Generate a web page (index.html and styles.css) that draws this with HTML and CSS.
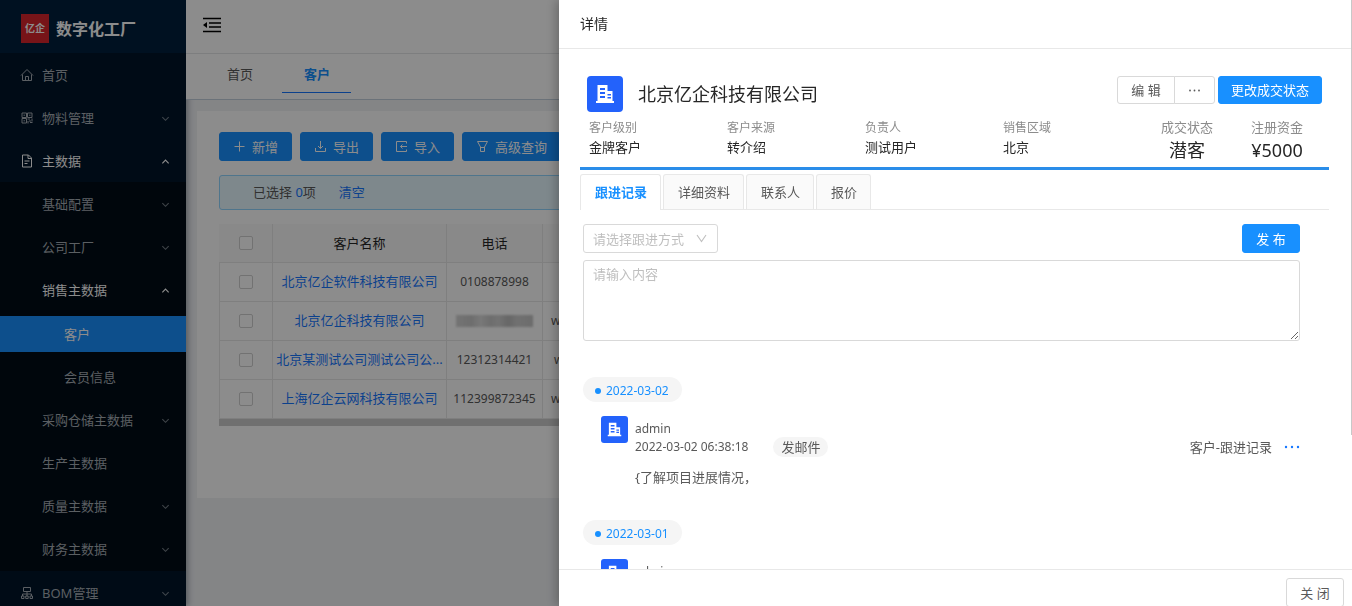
FILE: index.html
```html
<!DOCTYPE html>
<html lang="zh-CN">
<head>
<meta charset="utf-8">
<title>数字化工厂</title>
<link rel="stylesheet" href="styles.css">
</head>
<body>
<svg class="defs" aria-hidden="true">
  <symbol id="down" viewBox="0 0 10 10"><path d="M1.5 3.5 5 7l3.500-3.500" fill="none" stroke="currentColor" stroke-width="1.200"/></symbol>
  <symbol id="chevron" viewBox="0 0 13 13"><path d="M2 3l4.500 6.500L11 3" fill="none" stroke="currentColor" stroke-width="1.100"/></symbol>
  <symbol id="up" viewBox="0 0 10 10"><path d="M1.500 7 5 3.500 8.500 7" fill="none" stroke="currentColor" stroke-width="1.300"/></symbol>
  <symbol id="building" viewBox="0 0 36 36"><path fill="#fff" fill-rule="evenodd" d="M10.500 9h10v6h5v10H27v2H9v-2h1.500zM13 12v2h5v-2zM13 16v2h5v-2zM13 20v2h5v-2zM20.500 18v1.500H24V18zM20.500 21v1.500H24V21z"/></symbol>
  <symbol id="dots" viewBox="0 0 16 16"><circle cx="2" cy="8" r="1.200"/><circle cx="8" cy="8" r="1.200"/><circle cx="14" cy="8" r="1.200"/></symbol>
  <symbol id="dots-small" viewBox="0 0 13 13"><circle cx="2" cy="6.500" r=".9"/><circle cx="6.500" cy="6.500" r=".9"/><circle cx="11" cy="6.500" r=".9"/></symbol>
</svg>

<div class="app">
  <aside class="sidebar">
    <div class="brand"><span class="brand-mark">亿企</span><span class="brand-name">数字化工厂</span></div>
    <nav>
      <ul class="menu">
        <li><a href="#" class="item"><svg class="ico" viewBox="0 0 14 14"><path d="M1 7.500 7 1.500l6 6M2.500 6.500v6h9v-6M5.500 12.500v-4h3v4" /></svg><span>首页</span></a></li>
        <li><a href="#" class="item"><svg class="ico" viewBox="0 0 14 14"><path d="M2 2h4.500v4.500H2zM7.500 2H12v4.500H7.500zM2 7.500h4.500V12H2zM3.500 4.200h1.500M9 4.200h1.500M3.500 9.800h1.500M7.500 8h2.500M12 7.500v3M8 10v2.500M10 11.500h2.500M10 9v2"/></svg><span>物料管理</span><svg class="arrow"><use href="#down"/></svg></a></li>
        <li><a href="#" class="item open"><svg class="ico" viewBox="0 0 14 14"><path d="M2.500 1h6l3 3v9h-9zM8 1v3.500h3.500M4.500 7h5M4.500 9.500h3"/></svg><span>主数据</span><svg class="arrow"><use href="#up"/></svg></a>
          <ul class="menu sub">
            <li><a href="#" class="item"><span>基础配置</span><svg class="arrow"><use href="#down"/></svg></a></li>
            <li><a href="#" class="item"><span>公司工厂</span><svg class="arrow"><use href="#down"/></svg></a></li>
            <li><a href="#" class="item open"><span>销售主数据</span><svg class="arrow"><use href="#up"/></svg></a>
              <ul class="menu leaf">
                <li><a href="#" class="item active"><span>客户</span></a></li>
                <li><a href="#" class="item"><span>会员信息</span></a></li>
              </ul>
            </li>
            <li><a href="#" class="item"><span>采购仓储主数据</span><svg class="arrow"><use href="#down"/></svg></a></li>
            <li><a href="#" class="item"><span>生产主数据</span></a></li>
            <li><a href="#" class="item"><span>质量主数据</span><svg class="arrow"><use href="#down"/></svg></a></li>
            <li><a href="#" class="item"><span>财务主数据</span><svg class="arrow"><use href="#down"/></svg></a></li>
          </ul>
        </li>
        <li><a href="#" class="item"><svg class="ico" viewBox="0 0 14 14"><path d="M3.500 1.500h7v4h-7zM7 5.500v5M2.500 10V8h9v2M1.500 10h2.500v2.500H1.500zM5.700 10h2.500v2.500H5.700zM10 10h2.500v2.500H10z"/></svg><span>BOM管理</span><svg class="arrow"><use href="#down"/></svg></a></li>
      </ul>
    </nav>
  </aside>

  <div class="content">
    <header class="topbar">
      <button class="fold" aria-label="收起菜单"><svg viewBox="0 0 18 16"><path d="M0 1.500h18M6 6h12M6 10h12M0 14.500h18" stroke="#000" stroke-width="1.400"/><path d="M0 8 4 5v6z"/></svg></button>
    </header>
    <nav class="page-tabs"><a href="#">首页</a><a href="#" class="current">客户</a></nav>
    <main class="card">
      <div class="tools">
        <button class="btn primary"><svg viewBox="0 0 13 13"><path d="M6.500 1.500v10M1.500 6.500h10"/></svg>新增</button>
        <button class="btn primary"><svg viewBox="0 0 13 13"><path d="M6.500 1v7.500M4 6l2.500 2.500L9 6M1.500 8v3.500h10V8"/></svg>导出</button>
        <button class="btn primary"><svg viewBox="0 0 13 13"><path d="M11.500 3.500v-2h-10v10h10v-2M12 6.500H5.500M7.500 4.500l-2 2 2 2"/></svg>导入</button>
        <button class="btn primary"><svg viewBox="0 0 13 13"><path d="M1.500 1.500h10L8.500 7v4.500h-4V7zM4.500 7.500h4"/></svg>高级查询</button>
      </div>
      <div class="notice"><span>已选择 <b>0</b>项</span><a href="#">清空</a></div>
      <div class="table-wrap">
        <table>
          <colgroup><col class="c-check"><col class="c-name"><col class="c-phone"><col></colgroup>
          <thead><tr><th><input type="checkbox" aria-label="全选"></th><th>客户名称</th><th>电话</th><th></th></tr></thead>
          <tbody>
            <tr><td><input type="checkbox" aria-label="选择第1行"></td><td><a href="#">北京亿企软件科技有限公司</a></td><td>0108878998</td><td></td></tr>
            <tr><td><input type="checkbox" aria-label="选择第2行"></td><td><a href="#">北京亿企科技有限公司</a></td><td><div class="masked"></div></td><td class="site">w</td></tr>
            <tr><td><input type="checkbox" aria-label="选择第3行"></td><td><a href="#">北京某测试公司测试公司公...</a></td><td>12312314421</td><td class="site far">w</td></tr>
            <tr><td><input type="checkbox" aria-label="选择第4行"></td><td><a href="#">上海亿企云网科技有限公司</a></td><td>112399872345</td><td class="site">w</td></tr>
          </tbody>
        </table>
        <div class="hscroll"></div>
      </div>
    </main>
  </div>
</div>

<div class="mask"></div>

<section class="drawer" aria-label="详情">
  <header class="drawer-head">详情</header>
  <div class="drawer-body">
    <div class="summary">
      <div class="title-row">
        <svg class="avatar" viewBox="0 0 36 36"><use href="#building"/></svg>
        <h1>北京亿企科技有限公司</h1>
        <div class="actions">
          <div class="group"><button class="btn two">编 辑</button><button class="btn more" aria-label="更多"><svg><use href="#dots-small"/></svg></button></div>
          <button class="btn primary">更改成交状态</button>
        </div>
      </div>
      <div class="facts">
        <dl><dt>客户级别</dt><dd>金牌客户</dd></dl>
        <dl><dt>客户来源</dt><dd>转介绍</dd></dl>
        <dl><dt>负责人</dt><dd>测试用户</dd></dl>
        <dl><dt>销售区域</dt><dd>北京</dd></dl>
        <div class="stats">
          <dl><dt>成交状态</dt><dd>潜客</dd></dl>
          <dl><dt>注册资金</dt><dd>¥5000</dd></dl>
        </div>
      </div>
    </div>
    <nav class="card-tabs"><a href="#" class="current">跟进记录</a><a href="#">详细资料</a><a href="#">联系人</a><a href="#">报价</a></nav>
    <form class="follow">
      <div class="form-row">
        <div class="select"><select aria-label="跟进方式"><option>请选择跟进方式</option></select><svg><use href="#chevron"/></svg></div>
        <button type="button" class="btn primary two">发 布</button>
      </div>
      <textarea aria-label="内容" placeholder="请输入内容"></textarea>
    </form>
    <div class="day">
      <div class="date">2022-03-02</div>
      <article class="entry">
        <svg class="avatar small" viewBox="0 0 36 36"><use href="#building"/></svg>
        <div class="entry-main">
          <div class="who">admin</div>
          <div class="meta"><time>2022-03-02 06:38:18</time><span class="tag">发邮件</span><span class="source">客户-跟进记录</span><button class="link-dots" aria-label="更多操作"><svg><use href="#dots"/></svg></button></div>
          <p>{了解项目进展情况，</p>
        </div>
      </article>
    </div>
    <div class="day">
      <div class="date">2022-03-01</div>
      <article class="entry">
        <svg class="avatar small" viewBox="0 0 36 36"><use href="#building"/></svg>
        <div class="entry-main"><div class="who">admin</div></div>
      </article>
    </div>
  </div>
  <div class="thumb"></div>
  <footer class="drawer-foot"><button class="btn two">关 闭</button></footer>
</section>
</body>
</html>
```
FILE: styles.css
```css
* { box-sizing: border-box; }
body {
  margin: 0;
  font: 13px/20px "Noto Sans", "Noto Sans CJK SC", sans-serif;
  color: #595959;
  overflow: hidden;
}
a { color: #1677ff; text-decoration: none; }
ul { list-style: none; margin: 0; padding: 0; }
button, input, select, textarea { font: inherit; }
svg { flex: none; }
.defs { display: none; }

.app { display: flex; height: 100vh; background: #f0f2f5; }

/* sidebar */
.sidebar {
  flex: 0 0 186px;
  overflow: hidden;
  background: #001529;
  color: #a6adb4;
  box-shadow: 2px 0 6px rgba(0, 21, 41, .35);
}
.brand {
  display: flex;
  align-items: center;
  gap: 7px;
  height: 53px;
  padding: 4px 21px 0;
  background: #00203c;
  color: #fff;
}
.brand-mark {
  width: 28px;
  font-size: 10px;
  line-height: 29px;
  font-weight: 700;
  text-align: center;
  background: #d9262c;
}
.brand-name { font-size: 16px; font-weight: 700; }
.item {
  display: flex;
  align-items: center;
  height: 36px;
  margin-bottom: 7px;
  padding: 0 16px 0 20px;
  color: #a6adb4;
}
.menu { padding-top: 4px; }
.ico { width: 14px; height: 14px; margin-right: 8px; fill: none; stroke: currentColor; }
.arrow { width: 9px; height: 9px; margin-left: auto; opacity: .7; }
.item.open { color: #fff; }
.open .arrow { opacity: 1; }
.menu.sub { margin: -4px 0 4px; padding-bottom: 4px; background: #000c17; }
.sub .item { padding-left: 42px; }
.sub > li:last-child > .item { margin-bottom: 0; }
.menu.leaf { padding-top: 1px; }
.leaf .item { padding-left: 64px; }
.item.active { background: #1890ff; color: #fff; }

/* page */
.content { flex: 1; min-width: 0; }
.topbar, .page-tabs { position: relative; background: #fff; }
.topbar {
  display: flex;
  align-items: center;
  height: 54px;
  padding: 0 17px 4px;
  border-bottom: 1px solid #e4e6e8;
}
.fold { padding: 0; border: 0; background: none; }
.fold svg { display: block; width: 18px; height: 16px; }
.page-tabs {
  display: flex;
  gap: 8px;
  height: 46px;
  padding: 0 19px;
  border-bottom: 1px solid #c3d0dc;
}
.page-tabs a { height: 39px; padding: 10px 21px 9px 22px; color: #595959; }
.page-tabs .current { color: #1890ff; font-weight: 700; border-bottom: 1px solid #1677ff; }
.card {
  height: 387px;
  margin: 11px 11px 0;
  padding: 21px 22px;
  background: #fff;
}
.tools { display: flex; gap: 8px; }
.btn {
  display: inline-flex;
  align-items: center;
  justify-content: center;
  gap: 6px;
  height: 29px;
  padding: 0 13px;
  border: 1px solid #d9d9d9;
  border-radius: 3px;
  background: #fff;
  color: #595959;
  white-space: nowrap;
}
.btn svg { width: 13px; height: 13px; fill: none; stroke: currentColor; }
.two { min-width: 58px; }
.primary { border-color: #1890ff; background: #1890ff; color: #fff; }
.notice {
  display: flex;
  gap: 23px;
  margin-top: 14px;
  padding: 6px 33px 7px;
  border: 1px solid #91d5ff;
  border-radius: 3px;
  background: #e6f7ff;
}
.notice b { color: #1677ff; font-weight: 400; }
.table-wrap { margin-top: 14px; }
table { width: 100%; border-collapse: collapse; table-layout: fixed; }
.c-check { width: 53px; }
.c-name { width: 174px; }
.c-phone { width: 96px; }
th, td {
  height: 39px;
  padding: 0;
  border: 1px solid #e8e8e8;
  text-align: center;
  font-size: 12px;
  white-space: nowrap;
}
th { height: 38px; background: #fafafa; color: #262626; font-weight: 400; font-size: 13px; border-top: 0; }
th:first-child { border-left-color: #fafafa; }
td a { font-size: 13px; }
td.site { padding-left: 8px; text-align: left; }
td.far { padding-left: 11px; }
input[type="checkbox"] {
  appearance: none;
  display: block;
  width: 14px;
  height: 14px;
  margin: 0 auto;
  border: 1px solid #d0d0d0;
  border-radius: 2px;
  background: #fff;
}
.masked {
  height: 12px;
  margin: 0 9px;
  background: linear-gradient(90deg, #d4d4d4, #c8c8c8 20%, #dcdcdc 32%, #c8c8c8 45%, #d2d2d2 55%, #bcbcbc 68%, #cecece 80%, #c4c4c4);
  filter: blur(1px);
}
.hscroll { height: 7px; background: #cdcdcd; }

.mask { position: fixed; inset: 0; background: rgba(0, 0, 0, .45); }

/* drawer */
.drawer {
  position: fixed;
  inset: 0 0 0 auto;
  display: flex;
  flex-direction: column;
  width: 793px;
  max-width: 100%;
  background: #fff;
  box-shadow: -3px 0 10px rgba(0, 0, 0, .25);
}
.drawer-head {
  padding: 14px 21px;
  border-bottom: 1px solid #e8e8e8;
  font-size: 14px;
  color: #262626;
}
.drawer-body { flex: 1; min-height: 0; overflow: hidden; padding: 27px 23px 0 21px; }
.thumb { position: absolute; top: 0; right: 0; width: 1px; height: 435px; background: #c8c8c8; }
.summary { padding: 0 7px 10px; border-bottom: 3px solid #2a8de9; }
.title-row { display: flex; align-items: flex-start; }
.avatar { width: 36px; height: 36px; border-radius: 4px; background: #2362fb; }
h1 { flex: 1; margin: 5px 0 0 15px; font-size: 18px; line-height: 26px; font-weight: 400; color: #262626; }
.actions { display: flex; gap: 3px; }
.actions .btn { height: 28px; }
.actions .primary { padding: 0 12px; }
.group { display: flex; }
.group .btn:first-child { border-radius: 3px 0 0 3px; }
.group .more { margin-left: -1px; border-radius: 0 3px 3px 0; }
.more svg { fill: currentColor; stroke: none; }
.facts { display: flex; height: 45px; padding: 6px 2px 0; }
dl { margin: 0; }
dd { margin: 0; line-height: 20px; color: #262626; }
.facts > dl { width: 138px; }
dt { font-size: 12px; line-height: 19px; color: #8c8c8c; }
.stats { display: flex; gap: 38px; margin-left: auto; padding-right: 17px; text-align: center; }
.stats dt { font-size: 13px; }
.stats dd { font-size: 18px; line-height: 26px; }
.card-tabs { display: flex; gap: 2px; margin-top: 4px; border-bottom: 1px solid #e8e8e8; }
.card-tabs a {
  height: 35px;
  padding: 7px 13px 0 14px;
  border: 1px solid #e8e8e8;
  border-bottom: 0;
  border-radius: 3px 3px 0 0;
  background: #fafafa;
  color: #595959;
}
.card-tabs .current { margin-bottom: -1px; height: 36px; background: #fff; color: #1890ff; font-weight: 700; }
.follow { padding: 14px 29px 0 3px; }
.form-row { display: flex; justify-content: space-between; }
.select { position: relative; width: 135px; }
select {
  appearance: none;
  width: 100%;
  height: 29px;
  padding: 0 9px;
  border: 1px solid #d9d9d9;
  border-radius: 3px;
  background: #fff;
  color: #bfbfbf;
}
.select svg { position: absolute; right: 10px; top: 8px; width: 13px; height: 13px; color: #bfbfbf; pointer-events: none; }
textarea {
  display: block;
  width: 100%;
  height: 81px;
  margin-top: 7px;
  padding: 3px 9px;
  border: 1px solid #d9d9d9;
  border-radius: 3px;
  resize: vertical;
}
textarea::placeholder { color: #bfbfbf; }
.day { height: 107px; margin: 36px 29px 0 3px; }
.date {
  display: inline-flex;
  align-items: center;
  gap: 5px;
  height: 25px;
  padding: 2px 13px 0 12px;
  border-radius: 13px;
  background: #f5f5f5;
  color: #1890ff;
  font-size: 12px;
}
.date::before { content: ""; width: 6px; height: 6px; border-radius: 50%; background: #1890ff; }
.entry { display: flex; gap: 7px; margin-top: 14px; padding-left: 18px; }
.small { width: 27px; height: 27px; border-radius: 3px; }
.entry-main { flex: 1; padding-top: 2px; }
.who { line-height: 21px; font-size: 12px; }
.meta { display: flex; align-items: center; height: 16px; }
time { font-size: 12px; }
.tag { margin-left: 25px; padding: 0 8px; border-radius: 10px; background: #f5f5f5; }
.source { margin-left: auto; }
.link-dots { margin-left: 12px; padding: 0; border: 0; background: none; color: #1677ff; }
.link-dots svg { display: block; width: 16px; height: 16px; fill: currentColor; }
.entry p { margin: 12px 0 0; }
.drawer-foot {
  display: flex;
  flex: 0 0 37px;
  align-items: flex-start;
  justify-content: flex-end;
  overflow: hidden;
  padding: 8px 8px 0;
  border-top: 1px solid #e8e8e8;
}
```
